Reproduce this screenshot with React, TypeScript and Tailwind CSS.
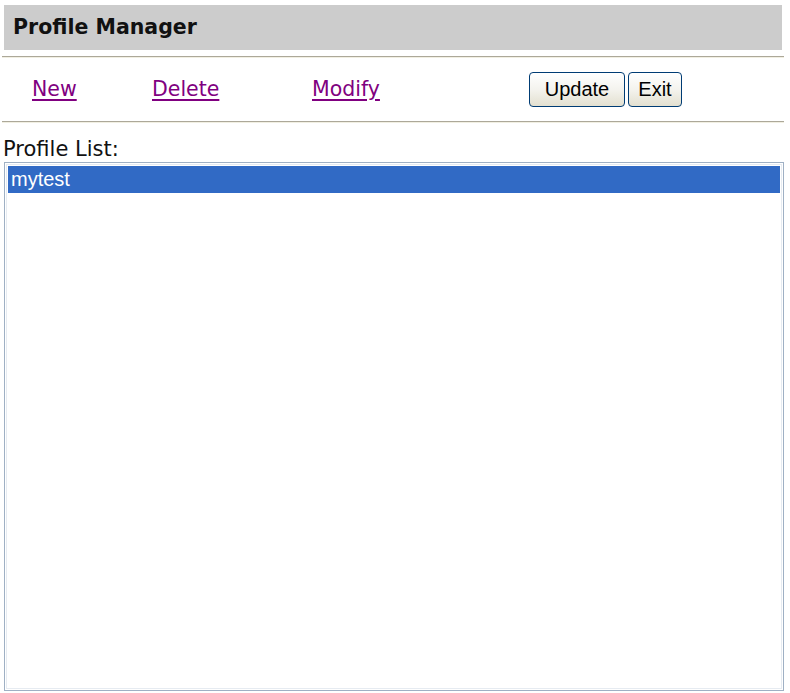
import React from "react";

const verdana = "font-['DejaVu_Sans',Verdana,sans-serif]";
const arial = "font-['Liberation_Sans',Arial,sans-serif]";

const Rule = () => (
    <div className="mx-[2px] w-[782px]">
        <div className="h-px bg-[#aca899]" />
        <div className="h-px bg-[#f1efe2]" />
    </div>
);

const XpButton = ({ label, width }: { label: string; width: string }) => (
    <button
        className={`${width} ${arial} h-[35px] rounded-[4px] border border-[#003c74] bg-gradient-to-b from-white via-[#f4f3ee] to-[#e3e0d0] text-[20px] leading-none text-black`}
    >
        {label}
    </button>
);

export default function App() {
    return (
        <div className="w-[790px] h-[693px] bg-white flex flex-col overflow-hidden">
            {/* Title bar */}
            <div className="mt-[5px] ml-[4px] w-[778px] h-[45px] bg-[#cccccc] flex items-center pl-[9px]">
                <span className={`${verdana} text-[20.5px] font-bold text-[#111]`}>Profile Manager</span>
            </div>

            <div className="h-[6px]" />
            <Rule />

            {/* Action row */}
            <div className="h-[63px] flex items-center pl-[32px]">
                <a href="#" className={`${verdana} w-[120px] text-[20.5px] text-[#800080] underline underline-offset-[3px]`}>
                    New
                </a>
                <a href="#" className={`${verdana} w-[160px] text-[20.5px] text-[#800080] underline underline-offset-[3px]`}>
                    Delete
                </a>
                <a href="#" className={`${verdana} w-[217px] text-[20.5px] text-[#800080] underline underline-offset-[3px]`}>
                    Modify
                </a>
                <div className="flex gap-[3px] mt-[-1px]">
                    <XpButton label="Update" width="w-[96px]" />
                    <XpButton label="Exit" width="w-[54px]" />
                </div>
            </div>

            <Rule />

            {/* Profile list */}
            <div className={`${verdana} text-[21px] leading-none text-[#111] pl-[3px] pt-[16px] h-[39px]`}>Profile List:</div>
            <div className="ml-[4px] w-[780px] h-[529px] border border-[#9fb0c4] p-px">
                <div className="h-full border border-[#e6ebf1] p-px bg-white">
                    <div className={`${arial} h-[27px] bg-[#316ac5] text-white text-[20px] leading-[27px] pl-[3px]`}>
                        mytest
                    </div>
                </div>
            </div>
        </div>
    );
}
